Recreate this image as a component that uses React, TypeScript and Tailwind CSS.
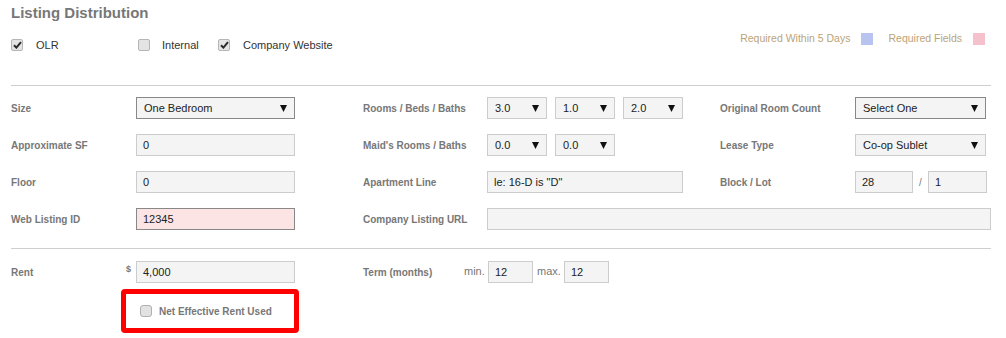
import React from "react";

const font = { fontFamily: '"Liberation Sans", Arial, sans-serif' };

function Check({ checked }: { checked?: boolean }) {
  return (
    <span className="flex h-[12px] w-[12px] shrink-0 items-center justify-center rounded-[2px] border border-[#b5b5b5] bg-[#e4e4e4]">
      {checked && (
        <svg width="9" height="8" viewBox="0 0 9 8">
          <path d="M1 4.2 L3.4 6.6 L8 1.2" fill="none" stroke="#2b2b2b" strokeWidth="2" />
        </svg>
      )}
    </span>
  );
}

function Label({ text, className = "" }: { text: string; className?: string }) {
  return <div className={`shrink-0 text-[10px] font-bold text-[#777] ${className}`}>{text}</div>;
}

function Field({ value = "", className = "" }: { value?: string; className?: string }) {
  return (
    <div
      className={`flex h-[22px] shrink-0 items-center border bg-[#f4f4f4] pl-[6px] text-[11px] text-[#222] ${className}`}
    >
      {value}
    </div>
  );
}

function Select({ value, className = "" }: { value: string; className?: string }) {
  return (
    <div
      className={`flex h-[22px] shrink-0 items-center justify-between border bg-[#f4f4f4] pl-[7px] pr-[7px] text-[11px] text-[#222] ${className}`}
    >
      <span>{value}</span>
      <svg width="7" height="7" viewBox="0 0 7 7">
        <path d="M0 0 H7 L3.5 7 Z" fill="#111" />
      </svg>
    </div>
  );
}

export default function App() {
  return (
    <div className="h-[338px] w-[1006px] overflow-hidden bg-white pl-[11px] pr-[15px]" style={font}>
      {/* header */}
      <div className="flex justify-between">
        <div>
          <h2 className="pt-[3px] text-[15px] font-bold leading-[20px] text-[#777]">Listing Distribution</h2>
          <div className="mt-[12px] flex h-[20px] items-center text-[11px] text-[#333]">
            <div className="flex w-[127px] items-center gap-[13px]">
              <Check checked />
              <span>OLR</span>
            </div>
            <div className="flex w-[80px] items-center gap-[12px]">
              <Check />
              <span>Internal</span>
            </div>
            <div className="flex items-center gap-[13px]">
              <Check checked />
              <span>Company Website</span>
            </div>
          </div>
        </div>
        <div className="flex h-[45px] items-center pr-[6px] pt-[33px] text-[10.5px] text-[#bba378]">
          <span>Required Within 5 Days</span>
          <span className="ml-[11px] h-[12px] w-[12px] bg-[#b8c3ef]" />
          <span className="ml-[15px]">Required Fields</span>
          <span className="ml-[11px] h-[12px] w-[12px] bg-[#f5c1cd]" />
        </div>
      </div>

      <div className="mt-[30px] border-t border-[#cfcfcf]" />

      {/* main grid */}
      <div className="mt-[11px] flex flex-col gap-[15px]">
        <div className="flex items-center">
          <Label text="Size" className="w-[125px]" />
          <Select value="One Bedroom" className="w-[159px] border-[#888]" />
          <Label text="Rooms / Beds / Baths" className="ml-[68px] w-[124px]" />
          <div className="flex w-[196px] gap-[8px]">
            <Select value="3.0" className="w-[60px] border-[#ccc]" />
            <Select value="1.0" className="w-[60px] border-[#ccc]" />
            <Select value="2.0" className="w-[60px] border-[#ccc]" />
          </div>
          <Label text="Original Room Count" className="ml-[37px] w-[135px]" />
          <Select value="Select One" className="w-[131px] border-[#888]" />
        </div>

        <div className="flex items-center">
          <Label text="Approximate SF" className="w-[125px]" />
          <Field value="0" className="w-[159px] border-[#ccc]" />
          <Label text="Maid's Rooms / Baths" className="ml-[68px] w-[124px]" />
          <div className="flex w-[196px] gap-[8px]">
            <Select value="0.0" className="w-[60px] border-[#ccc]" />
            <Select value="0.0" className="w-[60px] border-[#ccc]" />
          </div>
          <Label text="Lease Type" className="ml-[37px] w-[135px]" />
          <Select value="Co-op Sublet" className="w-[131px] border-[#ccc]" />
        </div>

        <div className="flex items-center">
          <Label text="Floor" className="w-[125px]" />
          <Field value="0" className="w-[159px] border-[#ccc]" />
          <Label text="Apartment Line" className="ml-[68px] w-[124px]" />
          <Field value={'le: 16-D is "D"'} className="w-[196px] border-[#ccc] pl-[4px]" />
          <Label text="Block / Lot" className="ml-[37px] w-[135px]" />
          <div className="flex items-center">
            <Field value="28" className="w-[58px] border-[#ccc]" />
            <span className="w-[15px] text-center text-[10px] text-[#777]">/</span>
            <Field value="1" className="w-[59px] border-[#ccc]" />
          </div>
        </div>

        <div className="flex items-center">
          <Label text="Web Listing ID" className="w-[125px]" />
          <Field value="12345" className="w-[159px] border-[#888] bg-[#fde4e4] pl-[2px]" />
          <Label text="Company Listing URL" className="ml-[68px] w-[124px]" />
          <Field className="w-[504px] border-[#ccc]" />
        </div>
      </div>

      <div className="mt-[18px] border-t border-[#cfcfcf]" />

      <div className="mt-[12px] flex items-center">
        <Label text="Rent" className="w-[115px]" />
        <span className="w-[10px] pb-[4px] text-[9px] font-bold text-[#777]">$</span>
        <Field value="4,000" className="w-[159px] border-[#ccc] pl-[2px]" />
        <Label text="Term (months)" className="ml-[68px] w-[101px]" />
        <span className="w-[24px] pb-[2px] text-[11px] text-[#777]">min.</span>
        <Field value="12" className="w-[45px] border-[#ccc] pl-[3px]" />
        <span className="ml-[4px] w-[27px] pb-[2px] text-[11px] text-[#777]">max.</span>
        <Field value="12" className="w-[45px] border-[#ccc] pl-[3px]" />
      </div>

      <div className="ml-[110px] mt-[6px] flex h-[44px] w-[178px] items-center gap-[7px] rounded-[4px] border-[5px] border-[#fe0000] pl-[14px]">
        <span className="h-[12px] w-[12px] rounded-[3px] border border-[#b0b0b0] bg-[#e2e2e2]" />
        <span className="text-[10px] font-bold text-[#777]">Net Effective Rent Used</span>
      </div>
    </div>
  );
}
